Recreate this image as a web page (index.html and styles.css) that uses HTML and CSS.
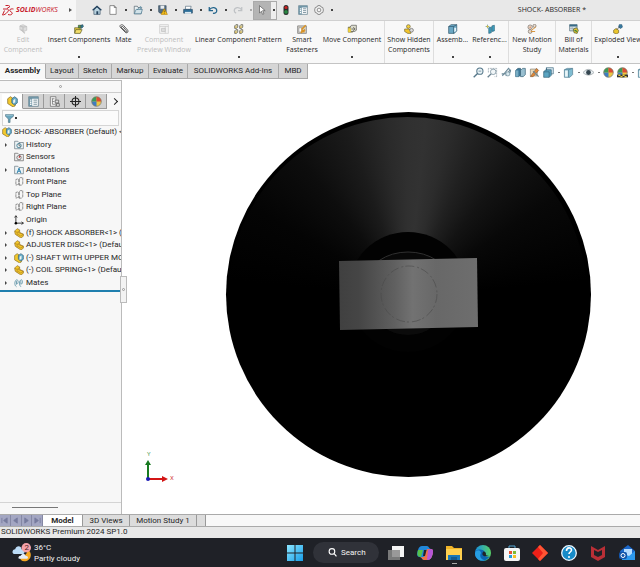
FILE: index.html
```html
<!DOCTYPE html>
<html lang="en">
<head>
<meta charset="utf-8">
<meta name="viewport" content="width=device-width, initial-scale=1">
<title>SHOCK- ABSORBER</title>
<link rel="stylesheet" href="styles.css">
</head>
<body>
<svg class="defs" aria-hidden="true">
  <symbol id="ds" viewBox="0 0 24 24"><g fill="none" stroke="#c8202c" stroke-width="2"><path d="M7 3h6l3 2-6 4M2 10h9c3 1 2 4 0 6-3 4-7 6-10 6l4-9M23 10c-5-1-9 1-7 4 2 2 6 3 4 6-1 2-5 2-8 1"/></g></symbol>
  <symbol id="home" viewBox="0 0 16 16"><path d="M3 8v7h10V8L8 3z" fill="#b9d3e0" stroke="#34495e"/><path d="M1 8.500 8 2l7 6.500" fill="none" stroke="#1f3f5c" stroke-width="2"/><path d="M7 10h3v5H7z" fill="#24425c"/></symbol>
  <symbol id="doc" viewBox="0 0 16 16"><path d="M3 1h7l3 3v11H3zM10 1v3h3" fill="#fff" stroke="#555"/></symbol>
  <symbol id="open" viewBox="0 0 16 16"><path d="M2 14V2h5l1 2h5v10z" fill="#e9f0f3" stroke="#45545f"/><path d="M2 14l3-7h10l-2 7zM7 8c1-3 3-4 6-4m-2-2 3 2-3 3" fill="#d2e2e8" stroke="#3d718a"/></symbol>
  <symbol id="save" viewBox="0 0 16 16"><path d="M1 1h12v12H3l-2-2z" fill="#556d82" stroke="#33495c"/><path d="M4 1h6v5H4z" fill="#e9edf0"/><path d="m10 6 5 9H5z" fill="#ffc61a" stroke="#b37d00"/><path d="M10 9v3m0 1v1" stroke="#222"/></symbol>
  <symbol id="print" viewBox="0 0 16 16"><path d="M4 2h9l-1 5H4z" fill="#fff" stroke="#4c6475"/><path d="M1 7h14v6H1z" fill="#2d6e98" stroke="#23445d"/><path d="M3 11h10v3H3z" fill="#dce9f0"/></symbol>
  <symbol id="undo" viewBox="0 0 16 16"><path d="M2 3v6h6M2 8c4-6 12-4 12 1 0 3-3 5-6 4" fill="none" stroke="#24658c" stroke-width="2"/></symbol>
  <symbol id="redo" viewBox="0 0 16 16"><path d="M14 3v6H8m6-1C10 2 2 4 2 9c0 2 1 3 3 4" fill="none" stroke="#bfc2c5" stroke-width="2"/></symbol>
  <symbol id="cursor" viewBox="0 0 16 16"><path d="M4 1v12l3-3 2 5 2-1-2-5h4z" fill="#fff" stroke="#4d4d4d"/></symbol>
  <symbol id="traffic" viewBox="0 0 16 16"><rect x="4" width="8" height="16" rx="4" fill="#272c2c"/><circle cx="8" cy="4" r="2.500" fill="#c22"/><circle cx="8" cy="11" r="3" fill="#298742"/></symbol>
  <symbol id="list" viewBox="0 0 16 16"><path d="M1 1h14v14H1z" fill="#f9fbfc" stroke="#53707f"/><path d="M1 1h14v3H1zM1 1h5v14H1z" fill="#7196a7"/><path d="M3 6h2M3 9h2m-2 3h2" stroke="#fff" stroke-width="2"/><path d="M8 6h5M8 9h5m-5 3h5" stroke="#456473"/></symbol>
  <symbol id="gear" viewBox="0 0 16 16"><path d="m6 1 4 0 1 2 3 1 1 4-1 4-3 1-1 2H6l-1-2-3-1-1-4 1-4 3-1z" fill="#f4f4f4" stroke="#555"/><circle cx="8" cy="8" r="3" fill="none" stroke="#555"/></symbol>
  <symbol id="edit" viewBox="0 0 16 16"><path d="M3 3l5-2 6 3v6l-5 2-6-3z" fill="#dedede" stroke="#bbb"/><path d="M8 5v7M3 3l5 2 6-1M5 9l6 6" fill="none" stroke="#c2c2c2" stroke-width="2"/></symbol>
  <symbol id="insert" viewBox="0 0 16 16"><path d="M1 6h9v8H1z" fill="#e5c842" stroke="#50501f"/><path d="M3 9h10l-3 6H1z" fill="#f3de69" stroke="#50501f"/><path d="M7 2h4v4H7z" fill="#5c9b43" stroke="#2e4b2e"/><path d="m11 2 3-1 1 3-3 3z" fill="#318096" stroke="#245"/></symbol>
  <symbol id="clip" viewBox="0 0 16 16"><path d="m3 5 8 9c3 1 4-2 3-4L7 2C4 0 0 2 2 5l8 8c2 1 3-1 2-2L6 4C4 3 3 5 4 6l6 6" fill="none" stroke="#555" stroke-width="1.500"/></symbol>
  <symbol id="preview" viewBox="0 0 16 16"><path d="M1 1h14v14H1zM1 4h14M10 4v11" fill="#f3f3f3" stroke="#c5c5c5"/><path d="M4 7h6v5H4z" fill="#ddd" stroke="#bbb"/></symbol>
  <symbol id="pattern" viewBox="0 0 16 16"><g fill="#d6d1ad" stroke="#4b4b43"><path d="m1 3 2-2h3v4L4 7H1zm8 0 2-2h3v4l-2 2H9zM1 11l2-2h3v4l-2 2H1zm8 0 2-2h3v4l-2 2H9z"/></g><path d="M2 4h2v2H2zm8 0h2v2h-2zm-8 8h2v2H2zm8 0h2v2h-2z" fill="#e5b735"/></symbol>
  <symbol id="smart" viewBox="0 0 16 16"><path d="M1 3h14v12H1z" fill="#d5d1c8" stroke="#676767"/><path d="M3 6h5v7H3z" fill="#fff" stroke="#888"/><path d="m7 9 7-7M6 14l7-5m-6 1 5 3" stroke="#d99223" stroke-width="2.500"/></symbol>
  <symbol id="move" viewBox="0 0 16 16"><path d="M2 5h7v8H2z" fill="#e5c638" stroke="#55512d"/><path d="m5 5 2-3h8v8l-3 2H5z" fill="#ddddce" stroke="#4c4c4c"/><path d="M7 8h5m-2-3 3 3-3 3" fill="none" stroke="#333"/><path d="M2 7h4v6H2z" fill="#f2d33b"/></symbol>
  <symbol id="showhide" viewBox="0 0 16 16"><circle cx="7" cy="4" r="3" fill="#f5d03c" stroke="#6a6132"/><path d="M1 8h7l3 3v4H6l-5-3z" fill="#f2c52e" stroke="#6a6132"/><circle cx="12" cy="10" r="3" fill="#ddd" stroke="#555"/></symbol>
  <symbol id="cube" viewBox="0 0 16 16"><path d="m1 4 4-3h9v10l-4 4H1z" fill="#6aa7c4" stroke="#294f63"/><path d="M1 4h8v11M9 4l5-3" fill="none" stroke="#294f63"/><path d="M10 6h3v5l-3 2z" fill="#e5f3fa"/></symbol>
  <symbol id="refgeo" viewBox="0 0 16 16"><path d="m6 6 4-1v9l-4 1zm5-3 4-1v9l-4 1z" fill="#40a0bf" stroke="#245f76"/><path d="M1 4h6M4 1v6" stroke="#23728e"/><circle cx="4" cy="4" r="1.500" fill="#f0c52f"/></symbol>
  <symbol id="motion" viewBox="0 0 16 16"><g fill="#eadfd4" stroke="#6d6259"><circle cx="5" cy="5" r="3.500"/><circle cx="12" cy="3" r="2.500"/><circle cx="5" cy="12" r="3"/></g><path d="m7 10 7-5M6 12l7 0" stroke="#d79135" stroke-width="1.500"/><circle cx="5" cy="5" r="1" fill="#d65c24"/></symbol>
  <symbol id="bom" viewBox="0 0 16 16"><path d="M1 1h12v10H1z" fill="#dde5e9" stroke="#415f6e"/><path d="M1 1h12v3H1z" fill="#376b87"/><path d="M1 7h12M5 4v7" stroke="#8da0ab"/><path d="m7 8 5-2 3 4-2 5-5-1z" fill="#e6c134" stroke="#3c522c"/><path d="m9 10 4 2" stroke="#29813e" stroke-width="2"/></symbol>
  <symbol id="explode" viewBox="0 0 16 16"><path d="m1 10 4-3 4 3v4l-4 2-4-2z" fill="#ebc62d" stroke="#665921"/><path d="m10 1 4 0 1 4-3 2-3-2z" fill="#3b80a7" stroke="#205070"/><path d="m6 9 5-5" stroke="#333"/></symbol>
  <symbol id="lens" viewBox="0 0 16 16"><circle cx="10" cy="6" r="4.500" fill="#eaf3f7" stroke="#557789" stroke-width="1.500"/><path d="m7 9-6 6" stroke="#557789" stroke-width="2"/><path d="M8 6h4" stroke="#557789"/></symbol>
  <symbol id="lensbox" viewBox="0 0 16 16"><path d="M2 8V2h12v12h-3" fill="none" stroke="#8a9ba4" stroke-dasharray="3 1"/><circle cx="9" cy="7" r="4" fill="#f1f6f8" stroke="#698290"/><path d="m6 10-5 5" stroke="#698290" stroke-width="2"/></symbol>
  <symbol id="prev" viewBox="0 0 16 16"><path d="m2 13 9-11 2 2-6 9M1 10h7c5 0 6-4 6-6" fill="none" stroke="#6b8998" stroke-width="1.500"/><circle cx="10" cy="10" r="3" fill="#d9e9ef" stroke="#6b8998"/></symbol>
  <symbol id="section" viewBox="0 0 16 16"><path d="m1 5 3-3h4v10l-3 2H1z" fill="#3c7898" stroke="#25526a"/><path d="m8 5 3-3h4v9l-3 3H8z" fill="#99bfd0" stroke="#366074"/><path d="M1 5h4v9H1z" fill="#78adc4"/></symbol>
  <symbol id="dynamic" viewBox="0 0 16 16"><path d="M2 3h10v10H2z" fill="#e8d9bc" stroke="#8b8173"/><path d="m2 14 9-12 3 3-8 9z" fill="#e68a35" stroke="#8b603b"/><path d="m6 6 8 8" stroke="#708992" stroke-width="2"/></symbol>
  <symbol id="orient" viewBox="0 0 16 16"><path d="M5 1h10v9H5z" fill="#d8e9f0" stroke="#477085"/><path d="m1 7 3-3h8v8l-3 3H1z" fill="#5ba5c2" stroke="#326077"/><path d="M1 7h8v8M5 5V1" stroke="#326077" fill="none"/></symbol>
  <symbol id="display" viewBox="0 0 16 16"><path d="m2 4 4-2h8v9l-4 4H2z" fill="#7fbcd1" stroke="#517e91"/><path d="M2 4h6v11M8 4l6-2" fill="none" stroke="#517e91"/><path d="M3 5h4v9H3z" fill="#eaf5f8"/></symbol>
  <symbol id="eye" viewBox="0 0 16 16"><path d="M0 8c5-6 11-6 16 0-5 5-11 5-16 0z" fill="#e8eef1" stroke="#8a9499"/><circle cx="8" cy="8" r="3.500" fill="#354650"/></symbol>
  <symbol id="ball" viewBox="0 0 16 16"><circle cx="8" cy="8" r="7" fill="#ebc643"/><path d="M8 8V1A7 7 0 0 0 1 8z" fill="#399b57"/><path d="M8 8V1a7 7 0 0 1 7 7z" fill="#dd4b34"/><path d="M8 8H1a7 7 0 0 0 7 7z" fill="#3e7cc2"/><circle cx="8" cy="8" r="7" fill="none" stroke="#767976"/></symbol>
  <symbol id="scene" viewBox="0 0 16 16"><use href="#ball"/><path d="M0 11h16v4H0z" fill="#333"/><path d="M2 11h3v2H2zm6 0h3v2H8zm-3 2h3v2H5zm6 0h3v2h-3z" fill="#ebcc3a"/></symbol>
  <symbol id="assembly" viewBox="0 0 16 16"><path d="m1 4 4-3 3 2v5l4 2v4l-3 2-8-5z" fill="#f3c92c" stroke="#816620"/><path d="m7 4 4-3 4 3v6l-4 3-4-3z" fill="#63a9c6" stroke="#315f76"/><path d="m9 6 3-2v5l-3 2z" fill="#eff4ee"/></symbol>
  <symbol id="part" viewBox="0 0 16 16"><path d="m1 5 4-4 4 2v4l6 3v3l-4 3-9-6z" fill="#f5c92a" stroke="#88651b"/><path d="M1 5l4 2 4-3M5 7v5m1-5 9 3-4 3-5-3" fill="none" stroke="#a77c1e"/></symbol>
  <symbol id="config" viewBox="0 0 16 16"><path d="M2 1h8v14H2z" fill="#f4f4f4" stroke="#666"/><path d="M4 4h4M5 4v8h4M5 8h3" stroke="#666" fill="none"/><path d="M9 6h5v4H9zM11 11h4v4h-4z" fill="#ddd" stroke="#555"/></symbol>
  <symbol id="target" viewBox="0 0 16 16"><circle cx="8" cy="8" r="5" fill="none" stroke="#222" stroke-width="1.500"/><path d="M8 0v16M0 8h16" stroke="#222" stroke-width="1.500"/></symbol>
  <symbol id="filter" viewBox="0 0 16 16"><path d="M1 1h14v3L9 9v6H6V9L1 4z" fill="#69a6be" stroke="#3e6272"/><path d="M2 2h12" stroke="#d5eaf1"/></symbol>
  <symbol id="folder-h" viewBox="0 0 16 16"><path d="M1 14V2h5l2 2h7v10z" fill="#edf3f5" stroke="#596a73"/><circle cx="8" cy="9" r="3.500" fill="none" stroke="#478196" stroke-width="1.500"/><path d="M8 6v3l3 1" fill="none" stroke="#333"/></symbol>
  <symbol id="folder-s" viewBox="0 0 16 16"><path d="M1 14V2h5l2 2h7v10z" fill="#f0f0f0" stroke="#565656"/><circle cx="8" cy="9" r="3.500" fill="none" stroke="#484848"/><path d="m8 9 2-3" stroke="#b33" stroke-width="2"/></symbol>
  <symbol id="folder-a" viewBox="0 0 16 16"><path d="M1 14V2h5l2 2h7v10z" fill="#edf3f5" stroke="#596a73"/><path d="m5 13 3-8 3 8M6 10h4" fill="none" stroke="#277eab" stroke-width="1.500"/></symbol>
  <symbol id="plane" viewBox="0 0 16 16"><path d="M6 3 3 4v9l3-1m2 1h4l2-2V1h-4l-2 2zM8 3v10" fill="none" stroke="#555" stroke-dasharray="5 1"/></symbol>
  <symbol id="origin" viewBox="0 0 16 16"><path d="M3 2v11h12M1 4l2-3 2 3m7 7 3 2-3 2" fill="none" stroke="#333" stroke-width="1.500"/><circle cx="3" cy="13" r="2"/></symbol>
  <symbol id="mates" viewBox="0 0 16 16"><path d="M4 14c-4-2-3-10 0-11s4 6 0 7V5m7 9c-3-2-3-10 0-11s4 6 0 7V5" fill="none" stroke="#6b9cae" stroke-width="1.500"/></symbol>
  <symbol id="weather" viewBox="0 0 24 24"><path d="M9 16a7 7 0 0 0 10-8c8 4 5 14-2 15-4 1-7-2-8-7z" fill="#f6a723"/><path d="M4 14c-5 0-4-6 0-6 1-5 8-5 8 0 5 0 5 6 1 6z" fill="#bcdcf7"/><path d="M10 20c-3 0-2-4 1-4 1-3 6-3 6 0 4 0 4 4 1 4z" fill="#e3edfa"/><circle cx="18" cy="6" r="6" fill="#f5a1a8"/></symbol>
  <symbol id="win" viewBox="0 0 16 16"><linearGradient id="wg" x2="1" y2="1"><stop stop-color="#8be6ff"/><stop offset="1" stop-color="#189ee9"/></linearGradient><path d="M0 0h7.500v7.500H0zM8.500 0H16v7.500H8.500zM0 8.500h7.500V16H0zm8.500 0H16V16H8.500z" fill="url(#wg)"/></symbol>
  <symbol id="find" viewBox="0 0 16 16"><circle cx="7" cy="6" r="5" fill="none" stroke="#fff" stroke-width="2"/><path d="m11 10 4 5" stroke="#fff" stroke-width="2"/></symbol>
  <symbol id="tasks" viewBox="0 0 16 16"><path d="M4 1h12v11H4z" fill="#f4f4f4"/><path d="M0 5h12v10H0z" fill="#888" opacity=".85"/></symbol>
  <symbol id="copilot" viewBox="0 0 16 16"><path d="M5 1h5c2 0 2 3 4 3 3 0 2 4 1 7-1 4-4 4-6 4H7c-2 0-2-3-4-3-4 0-3-4-2-7 1-3 2-4 4-4z" fill="#2187d9"/><path d="M1 5h5l-2 7C0 12 0 9 1 5z" fill="#55c34a"/><path d="M3 12h4l3-8h4c3 0 2 4 1 7-1 4-4 4-6 4H7c-2 0-2-3-4-3z" fill="#ee7048"/><path d="m11 5 3-1c3 0 2 4 1 7-1 3-3 4-5 4z" fill="#b756d8"/><path d="M7 5h2.500l-1.500 6H6z" fill="#202329"/></symbol>
  <symbol id="explorer" viewBox="0 0 16 16"><path d="M0 1h6l2 2h8v12H0z" fill="#f0b429"/><path d="M0 4h16v11H0z" fill="#ffd04f"/><path d="M2 10h12v5H2z" fill="#1877b8"/><path d="M5 12h6v3H5z" fill="#12598f"/></symbol>
  <symbol id="edge" viewBox="0 0 16 16"><linearGradient id="eg" x2="1"><stop stop-color="#168ee0"/><stop offset="1" stop-color="#58d267"/></linearGradient><circle cx="8" cy="8" r="8" fill="url(#eg)"/><path d="M0 8c0-4 9-5 10 0 0 2-1 2 0 3 1 1 4 1 5 0-3 5-9 6-12 3C0 12 0 9 0 8z" fill="#0b65b5"/><path d="M6 8c-2 3 0 7 4 7-6 2-10-2-10-7 1-3 5-4 6 0z" fill="#279ee2"/><path d="M8 7c-2 3 1 6 8 3-2 1-6 1-5-1 0-2-2-3-3-2z" fill="#202329"/></symbol>
  <symbol id="store" viewBox="0 0 16 16"><path d="M5 4V1h6v3" fill="none" stroke="#58a9d5"/><rect y="3" width="16" height="13" rx="2" fill="#f5f5f5"/><path d="M5 6h3v3H5z" fill="#e65332"/><path d="M9 6h3v3H9z" fill="#7fba31"/><path d="M5 10h3v3H5z" fill="#249bd8"/><path d="M9 10h3v3H9z" fill="#f7be22"/></symbol>
  <symbol id="diamond" viewBox="0 0 16 16"><path d="m8 0 8 8-8 8-8-8z" fill="#ed2018"/><path d="m8 0 8 8-8 8-2-2 5-6-5-6z" fill="#ff5534"/></symbol>
  <symbol id="help" viewBox="0 0 16 16"><circle cx="8" cy="8" r="7.300" fill="#168bc8" stroke="#eef8ff" stroke-width="1.300"/><path d="M5.500 6c0-4 5-4 5-1 0 2-2.500 2-2.500 4" fill="none" stroke="#fff" stroke-width="1.600"/><circle cx="8" cy="12" r="1" fill="#fff"/></symbol>
  <symbol id="shield" viewBox="0 0 16 16"><path d="M1 1l7 4 7-4v11l-7 4-7-4zM4 5v5l4 2 4-2V5L8 7z" fill="#b92f36" fill-rule="evenodd"/></symbol>
  <symbol id="mail" viewBox="0 0 16 16"><path d="m1 6 8-6 7 6v9H3z" fill="#1b67c9"/><path d="M5 4h8v7H5z" fill="#b5dcff"/><path d="m3 8 7 3 6-5v9H3z" fill="#2c98ed"/><rect y="7" width="8" height="7" rx="2" fill="#1254a9"/><circle cx="4" cy="10.500" r="2" fill="none" stroke="#fff"/></symbol>
</svg>

<header class="titlebar">
  <div class="brand"><svg class="ds"><use href="#ds"/></svg><span class="wordmark"><b>SOLID</b>WORKS</span><button class="flyout" aria-label="Menu"></button></div>
  <div class="quick">
    <button aria-label="Home"><svg><use href="#home"/></svg></button>
    <button class="split" aria-label="New"><svg><use href="#doc"/></svg></button>
    <button class="split" aria-label="Open"><svg><use href="#open"/></svg></button>
    <button class="split" aria-label="Save"><svg><use href="#save"/></svg></button>
    <button class="split" aria-label="Print"><svg><use href="#print"/></svg></button>
    <button class="split" aria-label="Undo"><svg><use href="#undo"/></svg></button>
    <button class="split off" aria-label="Redo"><svg><use href="#redo"/></svg></button>
    <button class="split select" aria-label="Select"><svg><use href="#cursor"/></svg></button>
    <button aria-label="Rebuild"><svg><use href="#traffic"/></svg></button>
    <button aria-label="File Properties"><svg><use href="#list"/></svg></button>
    <button class="split" aria-label="Options"><svg><use href="#gear"/></svg></button>
  </div>
  <span class="doc-title">SHOCK- ABSORBER *</span>
</header>

<div class="ribbon">
  <button class="cmd w46" disabled><svg><use href="#edit"/></svg>Edit<br>Component</button>
  <button class="cmd w66 drop"><svg><use href="#insert"/></svg>Insert Components</button>
  <button class="cmd w23"><svg><use href="#clip"/></svg>Mate</button>
  <button class="cmd w58" disabled><svg><use href="#preview"/></svg>Component<br>Preview Window</button>
  <button class="cmd w91 drop"><svg><use href="#pattern"/></svg>Linear Component Pattern</button>
  <button class="cmd w36"><svg><use href="#smart"/></svg>Smart<br>Fasteners</button>
  <button class="cmd w65 drop sep"><svg><use href="#move"/></svg>Move Component</button>
  <button class="cmd w49 sep"><svg><use href="#showhide"/></svg>Show Hidden<br>Components</button>
  <button class="cmd w37 drop"><svg><use href="#cube"/></svg>Assemb...</button>
  <button class="cmd w38 drop sep"><svg><use href="#refgeo"/></svg>Referenc...</button>
  <button class="cmd w47 sep"><svg><use href="#motion"/></svg>New Motion<br>Study</button>
  <button class="cmd w36 sep"><svg><use href="#bom"/></svg>Bill of<br>Materials</button>
  <button class="cmd w52 drop"><svg><use href="#explode"/></svg>Exploded View</button>
</div>

<div class="tabrow">
  <nav class="tabs">
    <button class="tab w46 on">Assembly</button><button class="tab w33">Layout</button><button class="tab w33">Sketch</button><button class="tab w37">Markup</button><button class="tab w39">Evaluate</button><button class="tab w91">SOLIDWORKS Add-Ins</button><button class="tab w29">MBD</button>
  </nav>
  <div class="hud">
    <button aria-label="Zoom to Fit"><svg><use href="#lens"/></svg></button>
    <button aria-label="Zoom to Area"><svg><use href="#lensbox"/></svg></button>
    <button aria-label="Previous View"><svg><use href="#prev"/></svg></button>
    <button aria-label="Section View"><svg><use href="#section"/></svg></button>
    <button aria-label="Dynamic Annotation"><svg><use href="#dynamic"/></svg></button>
    <button class="more" aria-label="View Orientation"><svg><use href="#orient"/></svg></button>
    <button class="more" aria-label="Display Style"><svg><use href="#display"/></svg></button>
    <button class="more" aria-label="Hide/Show Items"><svg><use href="#eye"/></svg></button>
    <button aria-label="Edit Appearance"><svg><use href="#ball"/></svg></button>
    <button class="more" aria-label="Apply Scene"><svg><use href="#scene"/></svg></button>
    <button aria-label="View Settings"><svg><use href="#display"/></svg></button>
  </div>
</div>

<main class="work">
  <aside class="panel">
    <div class="grip"><i></i></div>
    <div class="managers">
      <button class="on" aria-label="Feature tree"><svg><use href="#assembly"/></svg></button>
      <button aria-label="Properties"><svg><use href="#list"/></svg></button>
      <button aria-label="Configurations"><svg><use href="#config"/></svg></button>
      <button aria-label="Dimensions"><svg><use href="#target"/></svg></button>
      <button aria-label="Display"><svg><use href="#ball"/></svg></button>
      <button class="next" aria-label="More tabs"></button>
    </div>
    <button class="filter" aria-label="Filter"><svg><use href="#filter"/></svg></button>
    <ul class="tree">
      <li class="root"><svg><use href="#assembly"/></svg>SHOCK- ABSORBER (Default) &lt;</li>
      <li class="has"><svg><use href="#folder-h"/></svg>History</li>
      <li><svg><use href="#folder-s"/></svg>Sensors</li>
      <li class="has"><svg><use href="#folder-a"/></svg>Annotations</li>
      <li><svg><use href="#plane"/></svg>Front Plane</li>
      <li><svg><use href="#plane"/></svg>Top Plane</li>
      <li><svg><use href="#plane"/></svg>Right Plane</li>
      <li><svg><use href="#origin"/></svg>Origin</li>
      <li class="has"><svg><use href="#part"/></svg>(f) SHOCK ABSORBER&lt;1&gt; (</li>
      <li class="has"><svg><use href="#part"/></svg>ADJUSTER DISC&lt;1&gt; (Defau</li>
      <li class="has"><svg><use href="#assembly"/></svg>(-) SHAFT WITH UPPER MO</li>
      <li class="has"><svg><use href="#part"/></svg>(-) COIL SPRING&lt;1&gt; (Defau</li>
      <li class="has"><svg><use href="#mates"/></svg>Mates</li>
    </ul>
    <div class="scroll"><i></i></div>
    <button class="handle" aria-label="Collapse panel"><i></i></button>
  </aside>
  <section class="view">
    <div class="disc">
      <svg viewBox="0 0 365 365">
        <defs>
          <linearGradient id="face"><stop stop-color="#404040"/><stop offset=".14" stop-color="#454545"/><stop offset=".4" stop-color="#606060"/><stop offset=".53" stop-color="#727272"/><stop offset=".7" stop-color="#686868"/><stop offset="1" stop-color="#6e6e6e"/></linearGradient>
        </defs>
        <circle cx="182" cy="180" r="60" fill="#020202"/>
        <ellipse cx="182" cy="168" rx="40" ry="28" fill="#080808" stroke="#303030"/>
        <ellipse cx="182" cy="208" rx="27" ry="15" fill="#0b0b0b"/>
        <path d="m113 149 138-3 1 69-138 3z" fill="url(#face)"/>
        <circle cx="183" cy="182" r="28" fill="none" stroke="#4a4a4a" stroke-width=".6" stroke-dasharray="9 3 2 2"/>
      </svg>
    </div>
    <svg class="triad" viewBox="0 0 36 36"><path d="M6 28V12" stroke="#187a20" stroke-width="2"/><path d="m3 14 3-5 3 5z" fill="#187a20"/><path d="M6 28h16" stroke="#d31515" stroke-width="2"/><path d="m20 25 6 3-6 3z" fill="#d31515"/><circle cx="6" cy="28" r="2" fill="#1b1bb5"/><text x="5" y="5" fill="#5b9f60">Y</text><text x="28" y="29" fill="#d34848">X</text></svg>
  </section>
</main>

<div class="sheets">
  <div class="steps"><button aria-label="First"><svg viewBox="0 0 8 8"><path d="M1 1v6M7 1 3 4l4 3z"/></svg></button><button aria-label="Previous"><svg viewBox="0 0 8 8"><path d="M6 1 2 4l4 3z"/></svg></button><button aria-label="Next"><svg viewBox="0 0 8 8"><path d="m2 1 4 3-4 3z"/></svg></button><button aria-label="Last"><svg viewBox="0 0 8 8"><path d="M7 1v6M1 1l4 3-4 3z"/></svg></button></div>
  <button class="sheet w40 on">Model</button><button class="sheet w47">3D Views</button><button class="sheet w67">Motion Study 1</button><span class="gap"></span>
</div>
<footer class="status">SOLIDWORKS Premium 2024 SP1.0</footer>

<div class="taskbar">
  <button class="weather"><span class="sky"><svg><use href="#weather"/></svg><em>2</em></span><span>36°C<br>Partly cloudy</span></button>
  <button class="start" aria-label="Start"><svg><use href="#win"/></svg></button>
  <button class="search"><svg><use href="#find"/></svg>Search</button>
  <div class="apps">
    <button aria-label="Task View"><svg><use href="#tasks"/></svg></button>
    <button aria-label="Copilot"><svg><use href="#copilot"/></svg></button>
    <button class="running" aria-label="File Explorer"><svg><use href="#explorer"/></svg></button>
    <button aria-label="Edge"><svg><use href="#edge"/></svg></button>
    <button aria-label="Store"><svg><use href="#store"/></svg></button>
    <button aria-label="Remote Desktop"><svg><use href="#diamond"/></svg></button>
    <button aria-label="Help"><svg><use href="#help"/></svg></button>
    <button aria-label="Security"><svg><use href="#shield"/></svg></button>
    <button aria-label="Mail"><svg><use href="#mail"/></svg></button>
  </div>
</div>
</body>
</html>
```
FILE: styles.css
```css
* { box-sizing: border-box; }
body {
  margin: 0;
  min-height: 100vh;
  display: flex;
  flex-direction: column;
  overflow: hidden;
  background: #fff;
  color: #262626;
  font: 8px/10px Roboto, "Open Sans", sans-serif;
}
button {
  margin: 0;
  padding: 0;
  border: 0;
  background: none;
  color: inherit;
  font: inherit;
  white-space: nowrap;
}
svg { display: block; flex: none; }
.defs { position: absolute; width: 0; height: 0; }

.w23 { width: 23px; }
.w29 { width: 29px; }
.w33 { width: 33px; }
.w36 { width: 36px; }
.w37 { width: 37px; }
.w38 { width: 38px; }
.w39 { width: 39px; }
.w40 { width: 40px; }
.w46 { width: 46px; }
.w47 { width: 47px; }
.w49 { width: 49px; }
.w52 { width: 52px; }
.w58 { width: 58px; }
.w65 { width: 65px; }
.w66 { width: 66px; }
.w67 { width: 67px; }
.w91 { width: 91px; }

/* Title bar */
.titlebar {
  height: 21px;
  display: flex;
  align-items: center;
  background: #e8e8e8;
  border-bottom: 1px solid #d0d0d0;
}
.brand {
  width: 76px;
  height: 20px;
  padding-left: 2px;
  display: flex;
  align-items: center;
  gap: 2px;
  background: #f7f7f7;
  color: #c8202c;
}
.ds { width: 12px; height: 12px; }
.wordmark { font: italic 7px/10px "Open Sans", sans-serif; }
.flyout {
  margin: 0 4px 0 auto;
  border: 2px solid transparent;
  border-left: 3px solid #555;
  border-right: 0;
}
.quick { display: flex; align-items: center; margin-left: 12px; }
.quick button { width: 17px; height: 19px; display: flex; align-items: center; justify-content: center; }
.quick svg { width: 10px; height: 10px; }
.quick .split { width: 25px; justify-content: flex-start; padding-left: 3px; }
.quick .split::after { content: ""; width: 2px; height: 2px; margin-left: 7px; background: #444; }
.quick .off { width: 23px; }
.quick .off::after { background: #aaa; }
.quick .select { width: 24px; border: 1px solid #aaa; background: linear-gradient(90deg, #b4b4b4 17px, #eee 17px); }
.quick .select::after { margin-left: 6px; }
.doc-title { margin: 0 54px 0 auto; font: 7px/10px "Open Sans", sans-serif; }

/* Command ribbon */
.ribbon {
  height: 43px;
  display: flex;
  background: #f8f8f8;
  border-bottom: 1px solid #c4c4c4;
  font: 7px/10px "Open Sans", sans-serif;
}
.cmd {
  flex: none;
  height: 42px;
  padding-top: 3px;
  display: flex;
  flex-direction: column;
  align-items: center;
  justify-content: flex-start;
  text-align: center;
}
.cmd svg { width: 10px; height: 10px; margin-bottom: 1px; }
.cmd:disabled { color: #bdbdbd; }
.sep { border-right: 1px solid #ddd; }
.drop::after { content: ""; width: 2px; height: 2px; margin-top: 11px; background: #444; }

/* Command tabs and view toolbar */
.tabrow { height: 16px; display: flex; justify-content: space-between; overflow: hidden; }
.tabs { display: flex; height: 15px; background: #d6d6d6; }
.tab { border: solid #a9a9a9; border-width: 0 1px 1px 0; }
.tab.on { background: #f8f8f8; font-weight: 700; border-color: #f8f8f8; border-right-color: #aaa; }
.hud { width: 167px; display: flex; align-items: center; overflow: hidden; }
.hud button { flex: none; width: 14px; height: 14px; display: flex; align-items: center; gap: 4px; }
.hud svg { width: 11px; height: 11px; }
.hud .more { width: 20px; }
.hud .more::after { content: ""; width: 2px; height: 1px; background: #777; }

/* Feature manager */
.work { flex: 1; display: flex; min-height: 0; }
.panel {
  position: relative;
  width: 122px;
  display: flex;
  flex-direction: column;
  background: #f7f7f7;
  border: solid #bbb;
  border-width: 1px 1px 0 0;
}
.grip { height: 12px; display: grid; place-items: center; border-bottom: 1px solid #ccc; }
.grip i, .handle i { width: 3px; height: 3px; border: 1px solid #999; border-radius: 50%; }
.managers { display: flex; height: 15px; margin: 1px 0 0 2px; }
.managers button { width: 21px; display: grid; place-items: center; background: #d2d2d2; border-right: 1px solid #999; border-bottom: 1px solid #999; }
.managers .on { background: #fff; border-bottom-color: #fff; }
.managers svg { width: 11px; height: 11px; }
.managers .next { width: 14px; background: none; border: 0; }
.next::after { content: ""; width: 4px; height: 4px; border: solid #222; border-width: 1px 1px 0 0; transform: rotate(45deg); }
.filter {
  display: flex;
  align-items: center;
  gap: 1px;
  height: 16px;
  margin: 1px 2px 0;
  padding-left: 2px;
  background: #fbfbfb;
  border: 1px solid #d5d5d5;
}
.filter svg { width: 9px; height: 9px; }
.filter::after { content: ""; width: 2px; height: 2px; background: #333; }
.tree {
  height: 166px;
  margin: 0;
  padding: 0 0 1px;
  display: grid;
  grid-auto-rows: 1fr;
  list-style: none;
  overflow: hidden;
  border-bottom: 2px solid #1f7fae;
}
.tree li { display: flex; align-items: center; gap: 2px; padding-left: 14px; white-space: nowrap; min-width: 0; overflow: hidden; }
.tree svg { width: 10px; height: 10px; }
.tree .root { padding-left: 2px; }
.tree .has { padding-left: 5px; }
.tree .has::before { content: ""; margin-right: 5px; border: 2px solid transparent; border-left-color: #444; border-right: 0; }
.scroll { height: 12px; margin-top: auto; padding: 4px 12px; border-top: 1px solid #d4d4d4; }
.scroll i { display: block; width: 46px; height: 1px; background: #777; }
.handle {
  position: absolute;
  left: 120px;
  top: 195px;
  width: 7px;
  height: 27px;
  display: grid;
  place-items: center;
  background: #f3f3f3;
  border: 1px solid #bbb;
}

/* Graphics area */
.view { position: relative; flex: 1; min-width: 0; }
.disc {
  position: relative;
  width: 365px;
  aspect-ratio: 1;
  margin: 32px 0 0 104px;
  border-radius: 50%;
  background: #000;
}
.disc::before {
  content: "";
  position: absolute;
  inset: 5px 4px 1px 2px;
  border-radius: 50%;
  background: conic-gradient(#303030, #323232 6deg, #2c2c2c 14deg, #202020 24deg, #131313 38deg, #080808 56deg, #000 85deg, #000 275deg, #040404 300deg, #0d0d0d 322deg, #1b1b1b 340deg, #2a2a2a 353deg, #303030);
}
.disc svg { position: relative; width: 100%; }
.triad { position: absolute; left: 20px; bottom: 27px; width: 36px; height: 36px; overflow: visible; font-size: 6px; }

/* Sheet tabs and status */
.sheets { height: 13px; display: flex; background: #f8f8f8; border: solid #aaa; border-width: 1px 0; }
.steps { width: 43px; display: flex; background: #a3a6c2; }
.steps button { flex: 1; display: grid; place-items: center; border-right: 1px solid #8588a4; }
.steps svg { width: 7px; height: 7px; fill: #777b9e; stroke: #777b9e; }
.sheet { border-right: 1px solid #999; background: #dcdcdc; line-height: 10px; }
.sheet.on { background: #fff; font-weight: 700; }
.gap { width: 9px; background: #ddd; border-right: 1px solid #999; }
.status { height: 11px; padding-left: 1px; background: #e8e8e8; }

/* Taskbar */
.taskbar { height: 29px; display: flex; align-items: center; background: #1f2127; color: #f2f2f2; }
.weather { width: 287px; display: flex; align-items: center; gap: 3px; padding-left: 12px; text-align: left; line-height: 11px; }
.sky { position: relative; }
.sky svg { width: 19px; height: 19px; }
.sky em { position: absolute; right: 2px; top: 0; color: #4b2025; font-style: normal; line-height: 10px; }
.start svg { width: 16px; height: 16px; }
.search {
  width: 66px;
  height: 21px;
  margin-left: 10px;
  padding-left: 15px;
  display: flex;
  align-items: center;
  gap: 4px;
  border-radius: 11px;
  background: #303239;
}
.search svg { width: 9px; height: 9px; }
.apps { flex: 1; display: flex; justify-content: space-between; margin: 0 5px 0 9px; }
.apps svg { width: 16px; height: 16px; }
.running { position: relative; }
.running::after { content: ""; position: absolute; left: 6px; top: 18px; width: 5px; height: 1px; background: #aaa; }
```
